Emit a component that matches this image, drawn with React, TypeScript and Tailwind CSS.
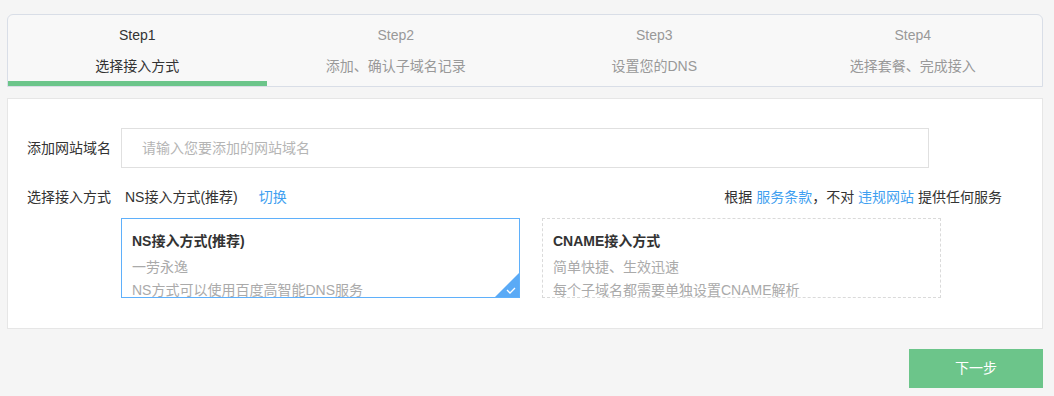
import React from "react";

const font = { fontFamily: '"Liberation Sans", "Noto Sans CJK SC", sans-serif' };

function Step({ n, label, active }: { n: string; label: string; active?: boolean }) {
  return (
    <div className="flex-1 flex flex-col items-center pt-[8px]">
      <div className={`h-[24px] leading-[24px] text-[14px] ${active ? "text-[#333]" : "text-[#999]"}`}>{n}</div>
      <div className={`mt-[7px] h-[24px] leading-[24px] text-[14px] ${active ? "text-[#333]" : "text-[#999]"}`}>{label}</div>
      <div className={`mt-[3px] h-[5px] w-full ${active ? "bg-[#6cc58a]" : "bg-transparent"}`} />
    </div>
  );
}

export default function App() {
  return (
    <div className="w-[1054px] h-[396px] bg-[#f5f5f5] pl-[7px] pr-[11px] pt-[14px]" style={font}>
      <div className="flex border border-[#d9dee7] rounded-t-[6px] bg-[#f8f8f8] overflow-hidden">
        <Step n="Step1" label="选择接入方式" active />
        <Step n="Step2" label="添加、确认子域名记录" />
        <Step n="Step3" label="设置您的DNS" />
        <Step n="Step4" label="选择套餐、完成接入" />
      </div>

      <div className="mt-[11px] bg-white border border-[#e6e6e6] pl-[19px] pt-[29px] pb-[30px]">
        <div className="flex items-center">
          <div className="w-[94px] text-[14px] text-[#333]">添加网站域名</div>
          <div className="w-[808px] h-[40px] border border-[#e0e0e0] flex items-center pl-[20px] text-[14px] text-[#b5b5b5]">
            请输入您要添加的网站域名
          </div>
        </div>

        <div className="mt-[17px] h-[24px] flex items-center pr-[40px] text-[14px]">
          <div className="w-[94px] text-[#333]">选择接入方式</div>
          <div className="pl-[4px] text-[#333]">NS接入方式(推荐)</div>
          <div className="ml-[21px] text-[#3f9ff0]">切换</div>
          <div className="ml-auto text-[#333]">
            根据 <span className="text-[#3f9ff0]">服务条款</span>，不对 <span className="text-[#3f9ff0]">违规网站</span> 提供任何服务
          </div>
        </div>

        <div className="mt-[9px] flex gap-[22px] pl-[94px]">
          <div className="relative w-[399px] h-[80px] border border-[#5fb0fb] overflow-hidden pl-[10px] pt-[10px]">
            <div className="h-[24px] leading-[24px] text-[14px] font-bold text-[#333]">NS接入方式(推荐)</div>
            <div className="mt-[3px] h-[23px] leading-[23px] text-[14px] text-[#aaa]">一劳永逸</div>
            <div className="h-[23px] leading-[23px] text-[14px] text-[#aaa]">NS方式可以使用百度高智能DNS服务</div>
            <svg className="absolute right-0 bottom-0" width="24" height="24" viewBox="0 0 24 24">
              <polygon points="24,0 24,24 0,24" fill="#5aaaf6" />
              <polyline points="12,17 15,20 20,15" fill="none" stroke="#ffffff" strokeWidth="1.3" />
            </svg>
          </div>
          <div className="w-[399px] h-[80px] border border-dashed border-[#dadada] overflow-hidden pl-[10px] pt-[10px]">
            <div className="h-[24px] leading-[24px] text-[14px] font-bold text-[#333]">CNAME接入方式</div>
            <div className="mt-[3px] h-[23px] leading-[23px] text-[14px] text-[#aaa]">简单快捷、生效迅速</div>
            <div className="h-[23px] leading-[23px] text-[14px] text-[#aaa]">每个子域名都需要单独设置CNAME解析</div>
          </div>
        </div>
      </div>

      <div className="mt-[20px] flex justify-end">
        <button className="w-[134px] h-[39px] bg-[#6cc58a] text-white text-[14px]">下一步</button>
      </div>
    </div>
  );
}
